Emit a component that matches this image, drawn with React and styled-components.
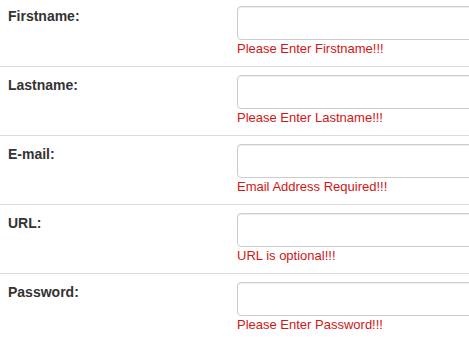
import React from 'react';
import styled, { createGlobalStyle } from 'styled-components';

const GlobalStyle = createGlobalStyle`
  html, body {
    margin: 0;
    padding: 0;
    background: #fff;
    overflow: hidden;
  }
  body {
    font-family: "Liberation Sans", Arial, sans-serif;
    font-size: 14px;
    line-height: 20px;
    color: #333;
  }
`

const Table = styled.table`
  border-collapse: collapse;
  border-spacing: 0;
  width: 560px;
`

const Row = styled.tr`
  & > td {
    border-top: ${props => props.first ? 'none' : '1px solid #ddd'};
    padding: ${props => props.first ? '6px 8px 8px' : '8px'};
    vertical-align: top;
  }
`

const LabelCell = styled.td`
  width: 213px;
`

const Label = styled.label`
  display: inline-block;
  font-weight: bold;
  font-size: 14px;
  line-height: 20px;
  color: #333;
`

const Input = styled.input`
  display: block;
  box-sizing: border-box;
  width: 100%;
  height: 34px;
  margin: 0;
  padding: 6px 12px;
  border: 1px solid #ccc;
  border-radius: 4px;
  box-shadow: inset 0 1px 1px rgba(0, 0, 0, 0.075);
  font-family: inherit;
  font-size: 14px;
  outline: none;
`

const Error = styled.span`
  display: block;
  font-size: 13px;
  line-height: 18px;
  color: #d01616;
`

const fields = [
  { label: 'Firstname:', type: 'text', error: 'Please Enter Firstname!!!' },
  { label: 'Lastname:', type: 'text', error: 'Please Enter Lastname!!!' },
  { label: 'E-mail:', type: 'text', error: 'Email Address Required!!!' },
  { label: 'URL:', type: 'text', error: 'URL is optional!!!' },
  { label: 'Password:', type: 'password', error: 'Please Enter Password!!!' },
]

export default function App() {
  return (
    <>
      <GlobalStyle />
      <Table>
        <tbody>
          {fields.map((f, i) => (
            <Row key={f.label} first={i === 0}>
              <LabelCell>
                <Label>{f.label}</Label>
              </LabelCell>
              <td>
                <Input type={f.type} />
                <Error>{f.error}</Error>
              </td>
            </Row>
          ))}
        </tbody>
      </Table>
    </>
  );
}
